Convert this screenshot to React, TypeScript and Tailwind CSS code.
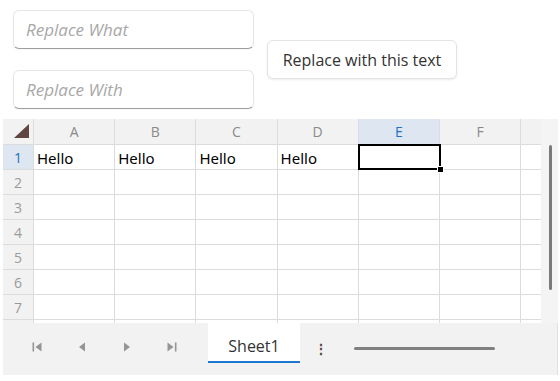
const COLS = ["A", "B", "C", "D", "E", "F"];
const ROWS = [1, 2, 3, 4, 5, 6, 7, 8];

function NavIcon({ kind }: { kind: "first" | "prev" | "next" | "last" }) {
  return (
    <svg width="12" height="12" viewBox="0 0 12 12" className="fill-[#959595]">
      {kind === "first" && (
        <>
          <rect x="1.5" y="1.5" width="1.6" height="9" />
          <path d="M10.5 1.5 L4.5 6 L10.5 10.5 Z" />
        </>
      )}
      {kind === "prev" && <path d="M9 1.5 L3 6 L9 10.5 Z" />}
      {kind === "next" && <path d="M3 1.5 L9 6 L3 10.5 Z" />}
      {kind === "last" && (
        <>
          <path d="M1.5 1.5 L7.5 6 L1.5 10.5 Z" />
          <rect x="8.9" y="1.5" width="1.6" height="9" />
        </>
      )}
    </svg>
  );
}

function Field({ placeholder }: { placeholder: string }) {
  return (
    <input
      placeholder={placeholder}
      className="h-[39px] w-[241px] rounded-md border border-[#e6e6e6] border-b-[#9e9e9e] bg-white px-[12px] text-[17px] italic text-[#333] shadow-[0_1px_2px_rgba(0,0,0,0.04)] outline-none placeholder:text-[#a8a8a8]"
    />
  );
}

function Grid() {
  return (
    <div className="flex h-[204px] overflow-hidden">
      <div className="w-[538px] overflow-hidden bg-white">
        <div className="flex h-[26px] bg-[#f2f2f2] text-[14px] text-[#8a8a8a]">
          <div className="relative w-[31px] shrink-0 border-r border-b border-[#dcdcdc]">
            <svg width="17" height="15" viewBox="0 0 17 15" className="absolute right-[3px] bottom-[5px]">
              <path d="M16 0 L16 14 L1 14 Z" fill="#5f4640" />
            </svg>
          </div>
          {COLS.map((c) => (
            <div
              key={c}
              className={
                c === "E"
                  ? "flex w-[81.2px] shrink-0 items-center justify-center border-r border-b border-[#dcdcdc] bg-[#dde6f1] text-[#1e73be]"
                  : "flex w-[81.2px] shrink-0 items-center justify-center border-r border-b border-[#dcdcdc]"
              }
            >
              {c}
            </div>
          ))}
          <div className="w-[30px] shrink-0 border-b border-[#dcdcdc]" />
        </div>
        {ROWS.map((r) => (
          <div key={r} className="flex h-[25px]">
            <div
              className={
                r === 1
                  ? "flex w-[31px] shrink-0 items-center justify-center border-r border-b border-[#dcdcdc] bg-[#dde6f1] text-[14px] text-[#1e73be]"
                  : "flex w-[31px] shrink-0 items-center justify-center border-r border-b border-[#dcdcdc] bg-[#f2f2f2] text-[14px] text-[#9a9a9a]"
              }
            >
              {r < 8 ? r : ""}
            </div>
            {COLS.map((c, i) => (
              <div
                key={c}
                className={
                  r === 1 && c === "E"
                    ? "relative z-10 flex w-[81.2px] shrink-0 items-center border-r border-b border-[#dcdcdc] pl-[3px] pt-[3px]"
                    : "relative flex w-[81.2px] shrink-0 items-center border-r border-b border-[#dcdcdc] pl-[3px] pt-[3px] font-['Noto_Sans',sans-serif] text-[15px] text-black"
                }
              >
                {r === 1 && i < 4 ? "Hello" : ""}
                {r === 1 && c === "E" && (
                  <div className="absolute -top-px -left-px h-[26px] w-[83px] border-2 border-black">
                    <div className="absolute -right-[5px] -bottom-[5px] h-[7px] w-[7px] border border-white bg-black" />
                  </div>
                )}
              </div>
            ))}
            <div className="w-[30px] shrink-0 border-b border-[#dcdcdc]" />
          </div>
        ))}
      </div>
      <div className="flex w-[17px] justify-center bg-[#f4f4f4] pt-[26px]">
        <div className="ml-[2px] h-[145px] w-[3px] rounded-full bg-[#7a7a7a]" />
      </div>
    </div>
  );
}

export default function App() {
  return (
    <div className="h-[381px] w-[560px] bg-white font-['Open_Sans',sans-serif]">
      <div className="flex h-[119px] items-start pt-[10px] pl-[13px]">
        <div className="flex flex-col gap-[21px]">
          <Field placeholder="Replace What" />
          <Field placeholder="Replace With" />
        </div>
        <button className="mt-[30px] ml-[13px] h-[39px] w-[190px] rounded-md border border-[#e3e3e3] bg-white text-[16px] text-[#333] shadow-[0_1px_2px_rgba(0,0,0,0.08)]">
          Replace with this text
        </button>
      </div>
      <div className="ml-[3px] w-[555px]">
        <Grid />
        <div className="flex h-[52px] items-start border-r border-[#e0e0e0] bg-[#f2f2f2]">
          <div className="flex h-[48px] items-center gap-[33px] pl-[28px] pr-[30px]">
            <NavIcon kind="first" />
            <NavIcon kind="prev" />
            <NavIcon kind="next" />
            <NavIcon kind="last" />
          </div>
          <div className="flex h-[40px] w-[92px] items-center justify-center border-b-2 border-[#1e78d0] bg-white pt-[7px] text-[16px] text-[#333]">
            Sheet1
          </div>
          <div className="flex h-[48px] items-center pl-[14px] pt-[2px] text-[14px] font-bold text-[#5b4540]">⋮</div>
          <div className="flex h-[48px] items-center pl-[26px] pt-[2px]">
            <div className="h-[3px] w-[141px] rounded-full bg-[#808080]" />
          </div>
        </div>
      </div>
    </div>
  );
}
